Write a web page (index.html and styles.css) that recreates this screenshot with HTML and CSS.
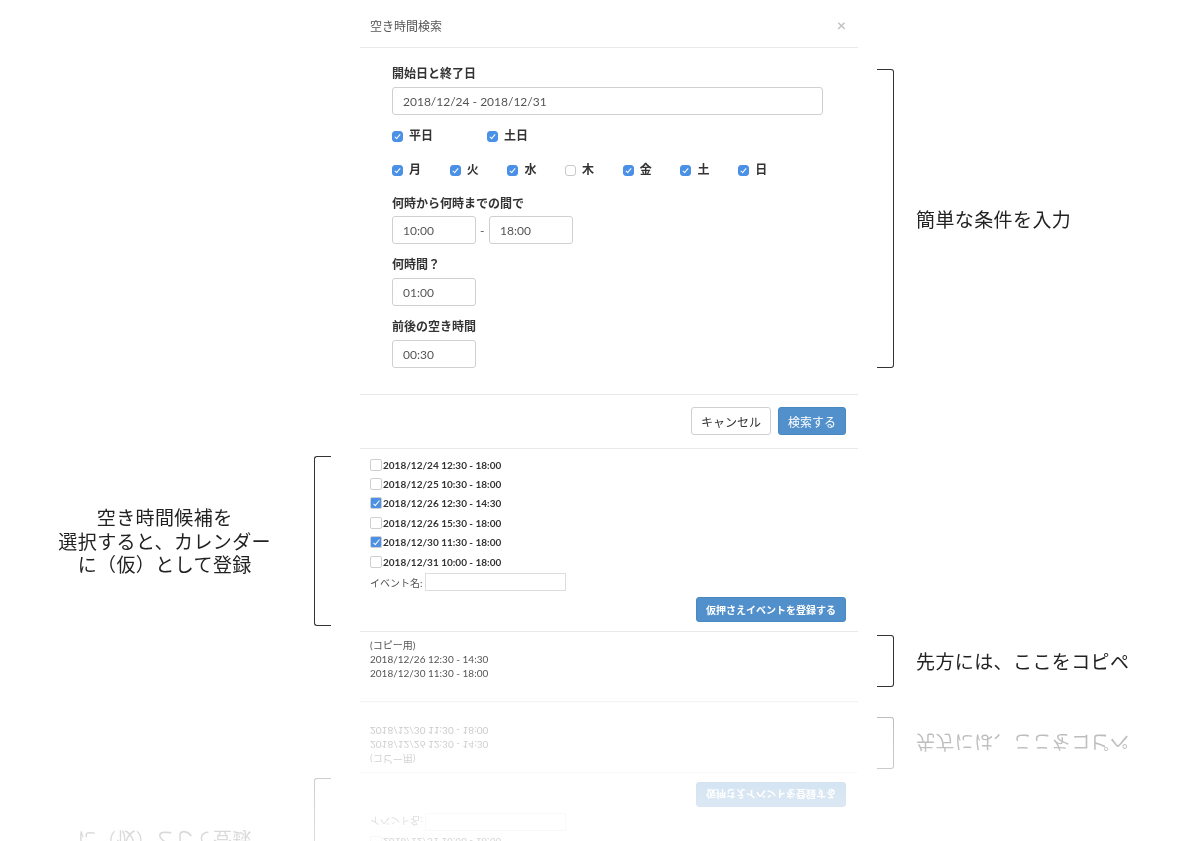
FILE: index.html
```html
<!DOCTYPE html>
<html lang="ja">
<head>
    <meta charset="UTF-8">
    <meta name="viewport" content="width=device-width, initial-scale=1.0">
    <title>空き時間検索</title>
    <link rel="stylesheet" href="styles.css">
</head>
<body>
    <div class="scene">
        <header class="modal-head">
            <h4 class="modal-title">空き時間検索</h4>
            <span class="close">×</span>
        </header>

        <section class="modal-body">
            <label class="field-label">開始日と終了日</label>
            <input type="text" class="date-range" value="2018/12/24 - 2018/12/31">

            <div class="checks checks-week">
                <label class="check"><input type="checkbox" checked> 平日</label>
                <label class="check"><input type="checkbox" checked> 土日</label>
            </div>

            <div class="checks checks-days">
                <label class="check"><input type="checkbox" checked> 月</label>
                <label class="check"><input type="checkbox" checked> 火</label>
                <label class="check"><input type="checkbox" checked> 水</label>
                <label class="check"><input type="checkbox"> 木</label>
                <label class="check"><input type="checkbox" checked> 金</label>
                <label class="check"><input type="checkbox" checked> 土</label>
                <label class="check"><input type="checkbox" checked> 日</label>
            </div>

            <label class="field-label spaced">何時から何時までの間で</label>
            <div class="time-range">
                <input type="text" class="time" value="10:00">
                <span class="dash">-</span>
                <input type="text" class="time" value="18:00">
            </div>

            <label class="field-label">何時間？</label>
            <input type="text" class="time" value="01:00">

            <label class="field-label">前後の空き時間</label>
            <input type="text" class="time" value="00:30">
        </section>
        <aside class="note note-search">
            <span class="bracket bracket-right"></span>
            <p>簡単な条件を入力</p>
        </aside>

        <footer class="modal-foot">
            <button class="btn">キャンセル</button>
            <button class="btn btn-primary">検索する</button>
        </footer>

        <section class="results">
            <label class="slot"><input type="checkbox">2018/12/24 12:30 - 18:00</label>
            <label class="slot"><input type="checkbox">2018/12/25 10:30 - 18:00</label>
            <label class="slot"><input type="checkbox" checked>2018/12/26 12:30 - 14:30</label>
            <label class="slot"><input type="checkbox">2018/12/26 15:30 - 18:00</label>
            <label class="slot"><input type="checkbox" checked>2018/12/30 11:30 - 18:00</label>
            <label class="slot"><input type="checkbox">2018/12/31 10:00 - 18:00</label>
            <div class="event-name">
                <span>イベント名:</span>
                <input type="text" class="event-input">
            </div>
            <div class="results-actions">
                <button class="btn btn-primary btn-small">仮押さえイベントを登録する</button>
            </div>
        </section>
        <aside class="note note-results">
            <p>空き時間候補を<br>選択すると、カレンダー<br>に（仮）として登録</p>
            <span class="bracket bracket-left"></span>
        </aside>

        <section class="copy">
            <div>(コピー用)</div>
            <div>2018/12/26 12:30 - 14:30</div>
            <div>2018/12/30 11:30 - 18:00</div>
        </section>
        <aside class="note note-copy">
            <span class="bracket bracket-right"></span>
            <p>先方には、ここをコピペ</p>
        </aside>
    </div>
    <!-- fades the mirrored scene out -->
    <div class="floor"></div>
</body>
</html>
```

FILE: styles.css
```css
body {
    margin: 0;
    padding: 0;
    background-color: #fff;
    color: #333;
    font-family: "Lato", "Noto Sans CJK JP", sans-serif;
}

.scene {
    height: 702px;
    display: grid;
    grid-template-columns: 360px 498px 1fr;
    grid-template-rows: auto auto auto auto 1fr;
    grid-template-areas:
        ".     head    ."
        ".     body    n1"
        ".     foot    ."
        "n2    results ."
        ".     copy    n3";
    background: #fff;
    -webkit-box-reflect: below 0px;
}

/* glossy floor under the picture */
.floor {
    position: relative;
    z-index: 1;
    height: 139px;
    background: linear-gradient(to bottom, rgba(255, 255, 255, 0.66), rgba(255, 255, 255, 0.84));
    -webkit-backdrop-filter: blur(0.7px);
    backdrop-filter: blur(0.7px);
}

.modal-head {
    grid-area: head;
    box-sizing: border-box;
    height: 48px;
    padding: 3px 12px 0 10px;
    display: flex;
    align-items: center;
    justify-content: space-between;
    border-bottom: 1px solid #e8e8e8;
}

.modal-title {
    margin: 0;
    font-size: 12px;
    font-weight: normal;
    color: #555;
}

.close {
    font-size: 16px;
    font-weight: bold;
    color: #c4c4c4;
    line-height: 16px;
}

.modal-body {
    grid-area: body;
    padding: 18px 0 26px 32px;
    border-bottom: 1px solid #e8e8e8;
    display: flex;
    flex-direction: column;
    align-items: flex-start;
}

.field-label {
    display: block;
    font-size: 12px;
    font-weight: bold;
    line-height: 16px;
    margin: 13px 0 5px;
    color: #333;
}

.field-label:first-child {
    margin: 0 0 5px;
}

.field-label.spaced {
    margin: 18px 0 4px;
}

input[type="text"] {
    box-sizing: border-box;
    height: 28px;
    border: 1px solid #d0d0d0;
    border-radius: 3px;
    padding: 0 10px;
    font-family: inherit;
    font-size: 12px;
    color: #555;
    background: #fff;
}

.date-range {
    width: 431px;
}

.time {
    width: 84px;
}

.time-range {
    display: flex;
    align-items: center;
    gap: 4px;
}

.dash {
    font-size: 12px;
    color: #555;
    width: 5px;
}

.checks {
    display: grid;
    margin-top: 13px;
}

.checks-week {
    grid-template-columns: 95px 95px;
}

.checks-days {
    grid-template-columns: repeat(7, 57.7px);
    margin-top: 18px;
}

.check {
    display: flex;
    align-items: center;
    gap: 6px;
    font-size: 12px;
    font-weight: bold;
    line-height: 16px;
    color: #333;
}

input[type="checkbox"] {
    -webkit-appearance: none;
    appearance: none;
    position: relative;
    margin: 0;
    width: 11px;
    height: 11px;
    border: 1px solid #c9c9c9;
    border-radius: 3px;
    background: #fff;
    box-sizing: border-box;
}

input[type="checkbox"]:checked {
    background: #4a90e6;
    border-color: #4a90e6;
}

input[type="checkbox"]:checked::after {
    content: "";
    position: absolute;
    left: 3px;
    top: 1px;
    width: 2px;
    height: 5px;
    border: solid #fff;
    border-width: 0 1.5px 1.5px 0;
    transform: rotate(40deg);
}

.modal-foot {
    grid-area: foot;
    box-sizing: border-box;
    height: 54px;
    padding: 12px 12px 0 0;
    display: flex;
    justify-content: flex-end;
    align-items: flex-start;
    gap: 7px;
    border-bottom: 1px solid #e8e8e8;
}

.btn {
    height: 28px;
    padding: 0 9px;
    border: 1px solid #d0d0d0;
    border-radius: 3px;
    background: #fff;
    font-family: inherit;
    font-size: 12px;
    color: #333;
    cursor: pointer;
}

.btn-primary {
    background: #5190ca;
    border-color: #4a88c2;
    color: #fff;
}

.btn-small {
    height: 25px;
    padding: 0 9px;
    font-size: 10px;
    font-weight: bold;
}

.results {
    grid-area: results;
    padding: 6px 12px 9px 10px;
    border-bottom: 1px solid #e8e8e8;
}

.slot {
    display: flex;
    align-items: center;
    gap: 1px;
    height: 19.4px;
    font-size: 10px;
    font-weight: bold;
    color: #333;
}

.slot input[type="checkbox"] {
    width: 12px;
    height: 12px;
    border-radius: 2px;
    border-color: #cfcfcf;
}

.slot input[type="checkbox"]:checked::after {
    left: 3.5px;
    top: 1px;
    height: 6px;
}

.event-name {
    display: flex;
    align-items: center;
    gap: 2px;
    margin-top: 2px;
    font-size: 10px;
    color: #555;
}

.event-input[type="text"] {
    width: 141px;
    height: 18px;
    border-radius: 0;
    border-color: #ddd;
}

.results-actions {
    display: flex;
    justify-content: flex-end;
    margin-top: 6px;
}

.copy {
    grid-area: copy;
    padding: 6px 10px 0;
    font-size: 10px;
    line-height: 14px;
    color: #555;
    border-bottom: 1px solid #f4f4f4;
}

/* notes around the dialog */
.note {
    display: flex;
    font-family: "Noto Sans CJK JP", sans-serif;
    font-size: 19px;
    letter-spacing: 0.4px;
    color: #222;
}

.note p {
    margin: 0;
}

.note-search {
    grid-area: n1;
    align-items: center;
    padding: 0 0 6px 19px;
}

.note-search .bracket {
    height: 299px;
}

.note-search p,
.note-copy p {
    margin-left: 22px;
}

.note-results {
    grid-area: n2;
    justify-content: flex-end;
    align-items: center;
    padding: 0 29px 0 0;
}

.note-results p {
    text-align: center;
    line-height: 23.5px;
    margin-right: 43px;
}

.note-results .bracket {
    height: 170px;
}

.note-copy {
    grid-area: n3;
    align-items: flex-start;
    padding: 3px 0 0 19px;
}

.note-copy .bracket {
    height: 52px;
}

.note-copy p {
    line-height: 52px;
}

.bracket {
    display: block;
    box-sizing: border-box;
    width: 17px;
    flex-shrink: 0;
    border: 1.5px solid #333;
}

.bracket-right {
    border-left: none;
    border-radius: 0 3px 3px 0;
}

.bracket-left {
    border-right: none;
    border-radius: 3px 0 0 3px;
}
```
